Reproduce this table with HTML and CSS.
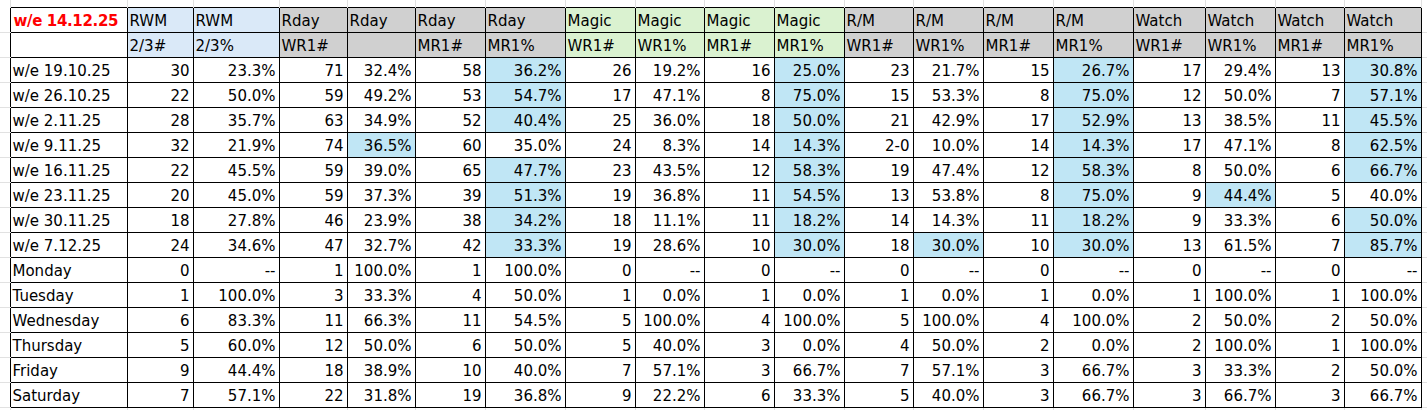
FILE: index.html
```html
<!DOCTYPE html>
<html>
<head>
<meta charset="utf-8">
<link rel="stylesheet" href="styles.css">
</head>
<body>
<table class="sheet">
<colgroup>
<col class="w10"><col class="w117"><col class="w66"><col class="w86"><col class="w68"><col class="w68"><col class="w70"><col class="w80"><col class="w70"><col class="w69"><col class="w70"><col class="w70"><col class="w69"><col class="w70"><col class="w70"><col class="w80"><col class="w72"><col class="w70"><col class="w69"><col class="w77"><col class="w40">
</colgroup>
<tr class="top-sp"><td></td><td></td><td></td><td></td><td></td><td></td><td></td><td></td><td></td><td></td><td></td><td></td><td></td><td></td><td></td><td></td><td></td><td></td><td></td><td></td><td></td></tr>
<tr><td class="g"></td><td class="c t title">w/e 14.12.25</td><td class="c t blue">RWM</td><td class="c t blue">RWM</td><td class="c t gray">Rday</td><td class="c t gray">Rday</td><td class="c t gray">Rday</td><td class="c t gray">Rday</td><td class="c t green">Magic</td><td class="c t green">Magic</td><td class="c t green">Magic</td><td class="c t green">Magic</td><td class="c t gray">R/M</td><td class="c t gray">R/M</td><td class="c t gray">R/M</td><td class="c t gray">R/M</td><td class="c t gray">Watch</td><td class="c t gray">Watch</td><td class="c t gray">Watch</td><td class="c t gray">Watch</td><td class="g"></td></tr>
<tr><td class="g"></td><td class="c t"></td><td class="c t blue">2/3#</td><td class="c t blue">2/3%</td><td class="c t gray">WR1#</td><td class="c t gray"></td><td class="c t gray">MR1#</td><td class="c t gray">MR1%</td><td class="c t green">WR1#</td><td class="c t green">WR1%</td><td class="c t green">MR1#</td><td class="c t green">MR1%</td><td class="c t gray">WR1#</td><td class="c t gray">WR1%</td><td class="c t gray">MR1#</td><td class="c t gray">MR1%</td><td class="c t gray">WR1#</td><td class="c t gray">WR1%</td><td class="c t gray">MR1#</td><td class="c t gray">MR1%</td><td class="g"></td></tr>
<tr><td class="g"></td><td class="c t">w/e 19.10.25</td><td class="c">30</td><td class="c">23.3%</td><td class="c">71</td><td class="c">32.4%</td><td class="c">58</td><td class="c hl">36.2%</td><td class="c">26</td><td class="c">19.2%</td><td class="c">16</td><td class="c hl">25.0%</td><td class="c">23</td><td class="c">21.7%</td><td class="c">15</td><td class="c hl">26.7%</td><td class="c">17</td><td class="c">29.4%</td><td class="c">13</td><td class="c hl">30.8%</td><td class="g"></td></tr>
<tr><td class="g"></td><td class="c t">w/e 26.10.25</td><td class="c">22</td><td class="c">50.0%</td><td class="c">59</td><td class="c">49.2%</td><td class="c">53</td><td class="c hl">54.7%</td><td class="c">17</td><td class="c">47.1%</td><td class="c">8</td><td class="c hl">75.0%</td><td class="c">15</td><td class="c">53.3%</td><td class="c">8</td><td class="c hl">75.0%</td><td class="c">12</td><td class="c">50.0%</td><td class="c">7</td><td class="c hl">57.1%</td><td class="g"></td></tr>
<tr><td class="g"></td><td class="c t">w/e 2.11.25</td><td class="c">28</td><td class="c">35.7%</td><td class="c">63</td><td class="c">34.9%</td><td class="c">52</td><td class="c hl">40.4%</td><td class="c">25</td><td class="c">36.0%</td><td class="c">18</td><td class="c hl">50.0%</td><td class="c">21</td><td class="c">42.9%</td><td class="c">17</td><td class="c hl">52.9%</td><td class="c">13</td><td class="c">38.5%</td><td class="c">11</td><td class="c hl">45.5%</td><td class="g"></td></tr>
<tr><td class="g"></td><td class="c t">w/e 9.11.25</td><td class="c">32</td><td class="c">21.9%</td><td class="c">74</td><td class="c hl">36.5%</td><td class="c">60</td><td class="c">35.0%</td><td class="c">24</td><td class="c">8.3%</td><td class="c">14</td><td class="c hl">14.3%</td><td class="c">2-0</td><td class="c">10.0%</td><td class="c">14</td><td class="c hl">14.3%</td><td class="c">17</td><td class="c">47.1%</td><td class="c">8</td><td class="c hl">62.5%</td><td class="g"></td></tr>
<tr><td class="g"></td><td class="c t">w/e 16.11.25</td><td class="c">22</td><td class="c">45.5%</td><td class="c">59</td><td class="c">39.0%</td><td class="c">65</td><td class="c hl">47.7%</td><td class="c">23</td><td class="c">43.5%</td><td class="c">12</td><td class="c hl">58.3%</td><td class="c">19</td><td class="c">47.4%</td><td class="c">12</td><td class="c hl">58.3%</td><td class="c">8</td><td class="c">50.0%</td><td class="c">6</td><td class="c hl">66.7%</td><td class="g"></td></tr>
<tr><td class="g"></td><td class="c t">w/e 23.11.25</td><td class="c">20</td><td class="c">45.0%</td><td class="c">59</td><td class="c">37.3%</td><td class="c">39</td><td class="c hl">51.3%</td><td class="c">19</td><td class="c">36.8%</td><td class="c">11</td><td class="c hl">54.5%</td><td class="c">13</td><td class="c">53.8%</td><td class="c">8</td><td class="c hl">75.0%</td><td class="c">9</td><td class="c hl">44.4%</td><td class="c">5</td><td class="c">40.0%</td><td class="g"></td></tr>
<tr><td class="g"></td><td class="c t">w/e 30.11.25</td><td class="c">18</td><td class="c">27.8%</td><td class="c">46</td><td class="c">23.9%</td><td class="c">38</td><td class="c hl">34.2%</td><td class="c">18</td><td class="c">11.1%</td><td class="c">11</td><td class="c hl">18.2%</td><td class="c">14</td><td class="c">14.3%</td><td class="c">11</td><td class="c hl">18.2%</td><td class="c">9</td><td class="c">33.3%</td><td class="c">6</td><td class="c hl">50.0%</td><td class="g"></td></tr>
<tr><td class="g"></td><td class="c t">w/e 7.12.25</td><td class="c">24</td><td class="c">34.6%</td><td class="c">47</td><td class="c">32.7%</td><td class="c">42</td><td class="c hl">33.3%</td><td class="c">19</td><td class="c">28.6%</td><td class="c">10</td><td class="c hl">30.0%</td><td class="c">18</td><td class="c hl">30.0%</td><td class="c">10</td><td class="c hl">30.0%</td><td class="c">13</td><td class="c">61.5%</td><td class="c">7</td><td class="c hl">85.7%</td><td class="g"></td></tr>
<tr><td class="g"></td><td class="c t">Monday</td><td class="c">0</td><td class="c">--</td><td class="c">1</td><td class="c">100.0%</td><td class="c">1</td><td class="c">100.0%</td><td class="c">0</td><td class="c">--</td><td class="c">0</td><td class="c">--</td><td class="c">0</td><td class="c">--</td><td class="c">0</td><td class="c">--</td><td class="c">0</td><td class="c">--</td><td class="c">0</td><td class="c">--</td><td class="g"></td></tr>
<tr><td class="g"></td><td class="c t">Tuesday</td><td class="c">1</td><td class="c">100.0%</td><td class="c">3</td><td class="c">33.3%</td><td class="c">4</td><td class="c">50.0%</td><td class="c">1</td><td class="c">0.0%</td><td class="c">1</td><td class="c">0.0%</td><td class="c">1</td><td class="c">0.0%</td><td class="c">1</td><td class="c">0.0%</td><td class="c">1</td><td class="c">100.0%</td><td class="c">1</td><td class="c">100.0%</td><td class="g"></td></tr>
<tr><td class="g"></td><td class="c t">Wednesday</td><td class="c">6</td><td class="c">83.3%</td><td class="c">11</td><td class="c">66.3%</td><td class="c">11</td><td class="c">54.5%</td><td class="c">5</td><td class="c">100.0%</td><td class="c">4</td><td class="c">100.0%</td><td class="c">5</td><td class="c">100.0%</td><td class="c">4</td><td class="c">100.0%</td><td class="c">2</td><td class="c">50.0%</td><td class="c">2</td><td class="c">50.0%</td><td class="g"></td></tr>
<tr><td class="g"></td><td class="c t">Thursday</td><td class="c">5</td><td class="c">60.0%</td><td class="c">12</td><td class="c">50.0%</td><td class="c">6</td><td class="c">50.0%</td><td class="c">5</td><td class="c">40.0%</td><td class="c">3</td><td class="c">0.0%</td><td class="c">4</td><td class="c">50.0%</td><td class="c">2</td><td class="c">0.0%</td><td class="c">2</td><td class="c">100.0%</td><td class="c">1</td><td class="c">100.0%</td><td class="g"></td></tr>
<tr><td class="g"></td><td class="c t">Friday</td><td class="c">9</td><td class="c">44.4%</td><td class="c">18</td><td class="c">38.9%</td><td class="c">10</td><td class="c">40.0%</td><td class="c">7</td><td class="c">57.1%</td><td class="c">3</td><td class="c">66.7%</td><td class="c">7</td><td class="c">57.1%</td><td class="c">3</td><td class="c">66.7%</td><td class="c">3</td><td class="c">33.3%</td><td class="c">2</td><td class="c">50.0%</td><td class="g"></td></tr>
<tr><td class="g"></td><td class="c t">Saturday</td><td class="c">7</td><td class="c">57.1%</td><td class="c">22</td><td class="c">31.8%</td><td class="c">19</td><td class="c">36.8%</td><td class="c">9</td><td class="c">22.2%</td><td class="c">6</td><td class="c">33.3%</td><td class="c">5</td><td class="c">40.0%</td><td class="c">3</td><td class="c">66.7%</td><td class="c">3</td><td class="c">66.7%</td><td class="c">3</td><td class="c">66.7%</td><td class="g"></td></tr>
<tr class="bot-sp"><td></td><td></td><td></td><td></td><td></td><td></td><td></td><td></td><td></td><td></td><td></td><td></td><td></td><td></td><td></td><td></td><td></td><td></td><td></td><td></td><td></td></tr>
</table>
</body>
</html>
```
FILE: styles.css
```css
html, body {
  margin: 0;
  padding: 0;
  background: #ffffff;
  overflow: hidden;
}

.sheet {
  border-collapse: collapse;
  table-layout: fixed;
  width: 1461px;
  font-family: "DejaVu Sans", sans-serif;
  font-size: 15px;
  color: #000000;
}

.w10 { width: 10px; }
.w40 { width: 40px; }
.w66 { width: 66px; }
.w68 { width: 68px; }
.w69 { width: 69px; }
.w70 { width: 70px; }
.w72 { width: 72px; }
.w77 { width: 77px; }
.w80 { width: 80px; }
.w86 { width: 86px; }
.w117 { width: 117px; }

.sheet td {
  padding: 0;
}

.top-sp td {
  height: 7px;
  line-height: 0;
  font-size: 0;
  border-right: 1px solid #e1e1e1;
}

.bot-sp td {
  height: 10px;
  line-height: 0;
  font-size: 0;
  border-right: 1px solid #e1e1e1;
}

.sheet td.g {
  border-bottom: 1px solid #e1e1e1;
}

.sheet td.c {
  border: 1px solid #000000;
  padding: 3px 3px 0 3px;
  line-height: 21px;
  text-align: right;
  white-space: nowrap;
  overflow: hidden;
  background: #ffffff;
}

.sheet td.t {
  text-align: left;
  padding-left: 2px;
}

.sheet td.title {
  padding-left: 3px;
  color: #ff0000;
  font-weight: bold;
  letter-spacing: -0.35px;
}

.sheet td.blue { background: #dae9f8; }
.sheet td.gray { background: #d0d0d0; }
.sheet td.green { background: #daf2d0; }
.sheet td.hl { background: #c0e6f5; }
```
